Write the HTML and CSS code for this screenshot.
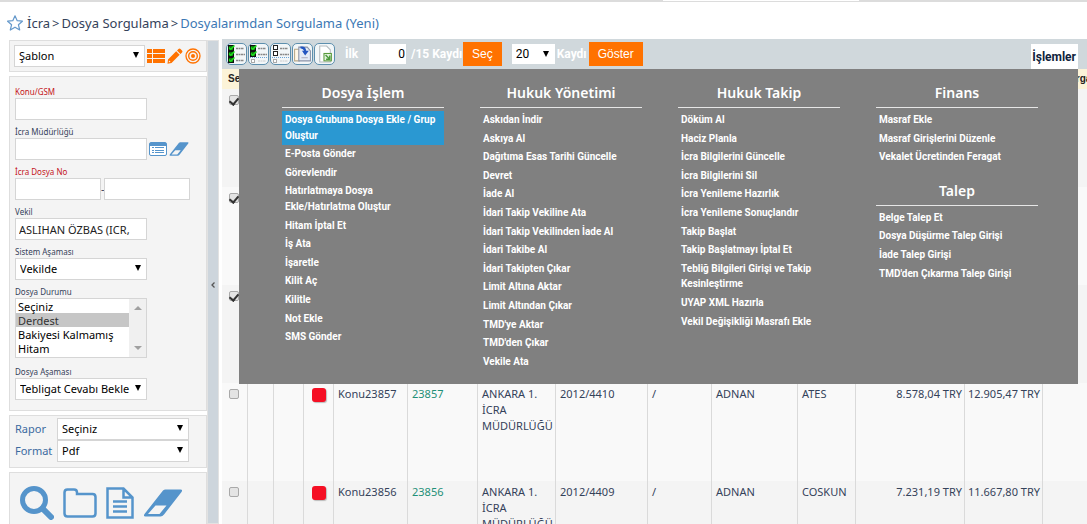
FILE: index.html
```html
<!DOCTYPE html>
<html lang="tr">
<head>
<meta charset="utf-8">
<title>Dosyalarımdan Sorgulama (Yeni)</title>
<link rel="stylesheet" href="styles.css">
</head>
<body>
<svg width="0" height="0" class="sprite" aria-hidden="true">
  <symbol id="eraser" viewBox="0 0 40 28">
    <path fill="#5594cb" fill-rule="evenodd" d="M20 1.5Q21 .5 22.500 .5H37.500Q40 .5 38.500 3L21 25.500Q19.500 27.500 17.500 27.500H2.500Q0 27.500 1.500 25ZM12.500 16.500 5 25H16.500L23.500 16.500Z"/>
  </symbol>
  <symbol id="tick" viewBox="0 0 7 6">
    <rect x=".5" y=".5" width="5" height="5" fill="#0c7a0c" stroke="#111"/><path d="M1 2.500 2.800 4.300 6.500 .5" fill="none" stroke="#1fe01f" stroke-width="1.500"/>
  </symbol>
</svg>
<div class="strip"></div>
<nav class="crumbs" aria-label="Konum">
  <svg class="star" viewBox="0 0 16 16"><path d="M8 .8 10.200 5.700 15.400 6.200 11.400 9.700 12.700 15 8 12.200 3.300 15 4.600 9.700 .6 6.200 5.800 5.700Z" fill="none" stroke="#6699cb" stroke-width="1.200" stroke-linejoin="round"/></svg>
  <span>İcra</span><span class="sep">&gt;</span><span>Dosya Sorgulama</span><span class="sep">&gt;</span><a href="#">Dosyalarımdan Sorgulama (Yeni)</a>
</nav>
<div class="page">
  <aside class="sidebar">
    <section class="panel template">
      <div class="drop"><select aria-label="Şablon"><option>Şablon</option></select></div>
      <svg class="list-icon" viewBox="0 0 18 14"><path fill="#ff7200" d="M0 0H5V4H0ZM6 0H18V4H6ZM0 5H5V9H0ZM6 5H18V9H6ZM0 10H5V14H0ZM6 10H18V14H6Z"/></svg>
      <svg class="edit-icon" viewBox="0 0 16 16"><path fill="#ff7200" d="M11.500 1Q12.500 0 13.500 1L15 2.500Q16 3.500 15 4.500L13.500 6 10 2.500ZM9.200 3.300 12.700 6.800 4.500 15 .5 15.700 1 11.500ZM2 12.500 1.800 14.300 3.700 14Z" fill-rule="evenodd"/></svg>
      <svg class="edit-icon" viewBox="0 0 16 16"><g fill="none" stroke="#ff7200"><circle cx="8" cy="8" r="7" stroke-width="1.300"/><circle cx="8" cy="8" r="4.300" stroke-width="1.400"/></g><circle cx="8" cy="8" r="2" fill="#ff7200"/></svg>
    </section>
    <section class="panel filters">
      <div class="field"><label class="req" for="konu">Konu/GSM</label><input class="box" id="konu" type="text"></div>
      <div class="field"><label for="mud">İcra Müdürlüğü</label>
        <div class="line"><input class="box" id="mud" type="text">
          <svg class="pick" viewBox="0 0 18 14"><rect x=".5" y=".5" width="17" height="13" rx="1.500" fill="#fff" stroke="#5594cb"/><path fill="#5594cb" d="M1 1H17V4H1ZM3 5H5V6H3ZM6 5H15V6H6ZM3 8H5V9H3ZM6 8H15V9H6ZM3 10H5V11H3ZM6 10H15V11H6Z"/></svg>
          <svg class="wipe" viewBox="0 0 40 28"><use href="#eraser"/></svg></div></div>
      <div class="field"><label class="req" for="no1">İcra Dosya No</label>
        <div class="line pair"><input class="box" id="no1" type="text"><span>-</span><input class="box" aria-label="İcra Dosya No 2" type="text"></div></div>
      <div class="field"><label for="vekil">Vekil</label><input class="box" id="vekil" type="text" value="ASLIHAN ÖZBAS (ICR,"></div>
      <div class="field"><label for="sistem">Sistem Aşaması</label><div class="drop"><select id="sistem"><option>Vekilde</option></select></div></div>
      <div class="field"><label for="durum">Dosya Durumu</label>
        <div class="listbox"><select id="durum" multiple size="4"><option>Seçiniz</option><option selected>Derdest</option><option>Bakiyesi Kalmamış</option><option>Hitam</option></select>
          <span class="scroll"><i class="up"></i><i class="down"></i></span></div></div>
      <div class="field"><label for="asama">Dosya Aşaması</label><div class="drop"><select id="asama"><option>Tebligat Cevabı Bekle</option></select></div></div>
    </section>
    <section class="panel report">
      <label for="rapor">Rapor</label><div class="drop"><select id="rapor"><option>Seçiniz</option></select></div>
      <label for="format">Format</label><div class="drop"><select id="format"><option>Pdf</option></select></div>
    </section>
    <section class="panel actions">
      <button type="button" aria-label="Ara"><svg width="34" height="34" viewBox="0 0 34 34"><g fill="none" stroke="#5594cb"><circle cx="14" cy="14" r="11.500" stroke-width="5"/><path d="M22.500 22.500 31 31" stroke-width="6" stroke-linecap="round"/></g></svg></button>
      <button type="button" aria-label="Klasör"><svg width="34" height="30" viewBox="0 0 34 30"><path d="M1.500 4.500Q1.500 1.500 4.500 1.500H11Q14 1.500 14 4.500V6H29.500Q32.500 6 32.500 9V25.500Q32.500 28.500 29.500 28.500H4.500Q1.500 28.500 1.500 25.500Z" fill="none" stroke="#5594cb" stroke-width="2.500"/></svg></button>
      <button type="button" aria-label="Belge"><svg width="28" height="32" viewBox="0 0 28 32"><path d="M1.500 1.500H17.500L26.500 10.500V30.500H1.500ZM17.500 1.500V10.500H26.500M7 14.500H21M7 19.500H21M7 24.500H21" fill="none" stroke="#5594cb" stroke-width="2.500"/></svg></button>
      <button type="button" aria-label="Temizle"><svg width="40" height="28" viewBox="0 0 40 28"><use href="#eraser"/></svg></button>
    </section>
  </aside>
  <button class="splitter" type="button" aria-label="Daralt"><svg width="4" height="6" viewBox="0 0 4 6"><path d="M3.500 .5 1 3 3.500 5.500" fill="none" stroke="#555" stroke-width="1.300"/></svg></button>
  <main class="results">
    <div class="toolbar">
      <div class="tools">
        <button type="button" aria-label="Tümünü seç"><svg viewBox="0 0 19 20"><use href="#tick" x="1" y="1" width="7" height="6"/><use href="#tick" x="1" y="7" width="7" height="6"/><use href="#tick" x="1" y="13" width="7" height="6"/><path d="M9 4.500H17M9 10.500H18M9 16.500H17" stroke="#888" stroke-width="1.500" stroke-dasharray="2 .5"/></svg></button>
        <button type="button" aria-label="Sayfayı seç"><svg viewBox="0 0 19 20"><use href="#tick" x="1" y="1" width="7" height="6"/><use href="#tick" x="1" y="7" width="7" height="6"/><path d="M1 13.500H18" stroke="#6ba3d6" stroke-dasharray="1 1"/><rect x="2.500" y="15.500" width="3" height="3" fill="#fff" stroke="#aaa"/><path d="M9 4.500H17M9 10.500H18" stroke="#888" stroke-width="1.500" stroke-dasharray="2 .5"/><path d="M9 17H17" stroke="#ccc" stroke-dasharray="2 .5"/></svg></button>
        <button type="button" aria-label="Seçimi kaldır"><svg viewBox="0 0 19 20"><g fill="#fff" stroke="#222"><rect x="2.500" y="1.500" width="4" height="4"/><rect x="2.500" y="7.500" width="4" height="4"/><rect x="2.500" y="15.500" width="3" height="3" stroke="#aaa"/></g><path d="M1 13.500H18" stroke="#6ba3d6" stroke-dasharray="1 1"/><path d="M9 4.500H17M9 10.500H18" stroke="#888" stroke-width="1.500" stroke-dasharray="2 .5"/><path d="M9 17H17" stroke="#ccc" stroke-dasharray="2 .5"/></svg></button>
        <button type="button" aria-label="Kopyala"><svg viewBox="0 0 18 18"><path d="M1.500 4.500H6V15.500H1.500Z" fill="#fff8e8" stroke="#b8a888"/><path d="M5.500 2.500H13.500L16.500 6V15.500H5.500Z" fill="#e4ebf6" stroke="#8b93a8"/><path d="M7 2Q12 1 12.500 6H15L11.500 10.500 8.500 6H10.500Q10 4 7 3.500Z" fill="#2456c0"/><path d="M8 12.500H14" stroke="#aab"/></svg></button>
        <button type="button" aria-label="Excel'e aktar"><svg viewBox="0 0 18 18"><path d="M4.500 1.500H11L14.500 5V16.500H4.500Z" fill="#fff" stroke="#b5bcc0"/><rect x="8.500" y="8.500" width="7" height="7" fill="#e3f3dd" stroke="#5a9a3c"/><path d="M10 10 14 14M14 10.500V14H10.500" fill="none" stroke="#4c9a3c" stroke-width="1.400"/></svg></button>
      </div>
      <label class="first" for="ilk">İlk</label><input class="count" id="ilk" type="text" value="0"><span class="total">/15 Kaydı</span>
      <button class="go" type="button">Seç</button>
      <div class="drop size"><select id="adet"><option>20</option></select></div><label class="rows" for="adet">Kaydı</label>
      <button class="go" type="button">Göster</button>
      <div class="operations">
        <button class="tab" type="button">İşlemler</button>
        <div class="mega">
          <section><h2>Dosya İşlem</h2><ul>
            <li class="on"><a href="#">Dosya Grubuna Dosya Ekle / Grup<br>Oluştur</a></li><li><a href="#">E-Posta Gönder</a></li><li><a href="#">Görevlendir</a></li><li><a href="#">Hatırlatmaya Dosya<br>Ekle/Hatırlatma Oluştur</a></li><li><a href="#">Hitam İptal Et</a></li><li><a href="#">İş Ata</a></li><li><a href="#">İşaretle</a></li><li><a href="#">Kilit Aç</a></li><li><a href="#">Kilitle</a></li><li><a href="#">Not Ekle</a></li><li><a href="#">SMS Gönder</a></li></ul></section>
          <section><h2>Hukuk Yönetimi</h2><ul>
            <li><a href="#">Askıdan İndir</a></li><li><a href="#">Askıya Al</a></li><li><a href="#">Dağıtıma Esas Tarihi Güncelle</a></li><li><a href="#">Devret</a></li><li><a href="#">İade Al</a></li><li><a href="#">İdari Takip Vekiline Ata</a></li><li><a href="#">İdari Takip Vekilinden İade Al</a></li><li><a href="#">İdari Takibe Al</a></li><li><a href="#">İdari Takipten Çıkar</a></li><li><a href="#">Limit Altına Aktar</a></li><li><a href="#">Limit Altından Çıkar</a></li><li><a href="#">TMD'ye Aktar</a></li><li><a href="#">TMD'den Çıkar</a></li><li><a href="#">Vekile Ata</a></li></ul></section>
          <section><h2>Hukuk Takip</h2><ul>
            <li><a href="#">Döküm Al</a></li><li><a href="#">Haciz Planla</a></li><li><a href="#">İcra Bilgilerini Güncelle</a></li><li><a href="#">İcra Bilgilerini Sil</a></li><li><a href="#">İcra Yenileme Hazırlık</a></li><li><a href="#">İcra Yenileme Sonuçlandır</a></li><li><a href="#">Takip Başlat</a></li><li><a href="#">Takip Başlatmayı İptal Et</a></li><li><a href="#">Tebliğ Bilgileri Girişi ve Takip<br>Kesinleştirme</a></li><li><a href="#">UYAP XML Hazırla</a></li><li><a href="#">Vekil Değişikliği Masrafı Ekle</a></li></ul></section>
          <section><h2>Finans</h2><ul>
            <li><a href="#">Masraf Ekle</a></li><li><a href="#">Masraf Girişlerini Düzenle</a></li><li><a href="#">Vekalet Ücretinden Feragat</a></li></ul>
            <h2>Talep</h2><ul>
            <li><a href="#">Belge Talep Et</a></li><li><a href="#">Dosya Düşürme Talep Girişi</a></li><li><a href="#">İade Talep Girişi</a></li><li><a href="#">TMD'den Çıkarma Talep Girişi</a></li></ul></section>
        </div>
      </div>
    </div>
    <table class="grid">
      <colgroup><col class="w26"><col class="w26"><col class="w30"><col class="w30"><col class="w74"><col class="w70"><col class="w78"><col class="w92"><col class="w64"><col class="w86"><col class="w58"><col class="w109"><col class="w78"><col></colgroup>
      <thead><tr><th>Seç</th><th></th><th></th><th></th><th></th><th></th><th></th><th></th><th></th><th></th><th></th><th></th><th></th><th class="last">Sorga</th></tr></thead>
      <tbody>
        <tr><td><input type="checkbox" aria-label="Kayıt 1" checked></td><td></td><td></td><td></td><td></td><td></td><td></td><td></td><td></td><td></td><td></td><td></td><td></td><td></td></tr>
        <tr><td><input type="checkbox" aria-label="Kayıt 2" checked></td><td></td><td></td><td></td><td></td><td></td><td></td><td></td><td></td><td></td><td></td><td></td><td></td><td></td></tr>
        <tr><td><input type="checkbox" aria-label="Kayıt 3" checked></td><td></td><td></td><td></td><td></td><td></td><td></td><td></td><td></td><td></td><td></td><td></td><td></td><td></td></tr>
        <tr><td><input type="checkbox" aria-label="Kayıt 4"></td><td></td><td></td><td><span class="flag"></span></td><td>Konu23857</td><td><a href="#">23857</a></td><td>ANKARA 1. İCRA MÜDÜRLÜĞÜ</td><td>2012/4410</td><td>/</td><td>ADNAN</td><td>ATES</td><td class="num">8.578,04 TRY</td><td class="num">12.905,47 TRY</td><td></td></tr>
        <tr><td><input type="checkbox" aria-label="Kayıt 5"></td><td></td><td></td><td><span class="flag"></span></td><td>Konu23856</td><td><a href="#">23856</a></td><td>ANKARA 1. İCRA MÜDÜRLÜĞÜ</td><td>2012/4409</td><td>/</td><td>ADNAN</td><td>COSKUN</td><td class="num">7.231,19 TRY</td><td class="num">11.667,80 TRY</td><td></td></tr>
      </tbody>
    </table>
  </main>
</div>
</body>
</html>
```
FILE: styles.css
```css
* { box-sizing: border-box; }
body {
  margin: 0;
  height: 100vh;
  overflow: hidden;
  display: flex;
  flex-direction: column;
  background: #fff;
  color: #34425a;
  font: 11px/16px "Noto Sans", sans-serif;
}
a { color: inherit; text-decoration: none; }
button, input, select { font: inherit; margin: 0; border-radius: 0; outline: 0; }
button { border: 0; padding: 0; background: none; }
svg { display: block; flex: none; }
.sprite { position: absolute; }

.strip {
  flex: none; height: 2px; border-bottom: 1px solid #dcdcdc;
  background: linear-gradient(90deg, #dcdcdc 61%, #fff 61%, #fff 79%, #dcdcdc 79%);
}
.crumbs { display: flex; align-items: center; gap: 2px; flex: none; height: 37px; padding: 4px 7px 0; font-size: 13px; }
.crumbs a { color: #3c78b4; }
.star { width: 16px; height: 16px; margin-right: 2px; }

.page { display: flex; flex: 1; min-height: 0; }
.sidebar { display: flex; flex-direction: column; gap: 4px; flex: none; width: 207px; padding: 1px 0 0 9px; }
.panel { flex: none; border: 1px solid #dedede; background: #f4f4f4; }
.box, .drop select { width: 100%; height: 22px; border: 1px solid #d5d5d5; background: #fff; color: #222; padding: 0 4px; }
.box { padding: 0 3px; }
.drop { position: relative; }
.drop select { display: block; appearance: none; color: #000; }
.drop::after { content: ""; position: absolute; right: 6px; top: 7px; border: 3px solid transparent; border-top: 6px solid #000; border-bottom: 0; pointer-events: none; }

.template { display: flex; align-items: center; gap: 2px; height: 32px; padding: 0 5px 0 4px; }
.template .drop { flex: 1; }
.list-icon { width: 18px; height: 14px; }
.edit-icon { width: 16px; height: 16px; }

.filters { display: flex; flex-direction: column; gap: 6px; padding: 9px 5px 10px; }
.field:last-child { margin-top: 2px; }
.field label { display: block; height: 12px; font-size: 8px; line-height: 12px; }
.field .req { color: #c4161c; }
.field .box, .field .drop, .listbox { display: block; width: 132px; }
.line { display: flex; align-items: center; gap: 2px; }
.line .pick { width: 18px; height: 14px; }
.line .wipe { width: 20px; height: 14px; }
.line.pair { gap: 0; }
.field .pair .box { width: 86px; }
.pair span { width: 3px; overflow: hidden; }
.listbox { display: flex; height: 60px; border: 1px solid #d5d5d5; background: #fff; }
.field .listbox { display: flex; }
.listbox select { flex: 1; min-width: 0; height: 58px; border: 0; padding: 0; overflow: hidden; background: #fff; color: #000; }
.listbox option { height: 14px; min-height: 14px; padding: 0 2px; line-height: 14px; }
.listbox option:checked { background: #c6c6c6 linear-gradient(#c6c6c6, #c6c6c6); color: #333; }
.scroll { display: flex; flex-direction: column; justify-content: space-between; align-items: center; width: 17px; padding: 7px 0; background: #f0f0f0; }
.scroll i { border: 4px solid transparent; }
.scroll .up { border-top: 0; border-bottom-color: #a0a0a0; }
.scroll .down { border-bottom: 0; border-top-color: #a0a0a0; }

.report { display: grid; grid-template-columns: 37px 132px; column-gap: 5px; align-items: center; padding: 2px 5px 5px; color: #3b6aa0; }

.actions { display: flex; align-items: center; gap: 9px; height: 62px; padding: 0 10px; }

.splitter { display: flex; align-items: center; flex: none; width: 12px; margin-top: 1px; padding: 6px 0 0 3px; border: 1px solid #e2e2e2; background: #cdd5dc; }

.results { flex: 1; min-width: 0; margin-left: 3px; }
.toolbar { display: flex; align-items: center; height: 30px; background: #d0d8dc; color: #fff; font: 700 12px/16px Roboto, sans-serif; }
.tools { display: flex; gap: 1px; padding-left: 4px; }
.tools button { width: 21px; height: 22px; border: 1px solid #5d8fae; border-radius: 5px; background: #f2f6f8; overflow: hidden; }
.tools svg { width: 19px; height: 20px; }
.first { width: 34px; padding-left: 10px; }
.count { width: 37px; height: 20px; border: 0; padding: 0 1px; text-align: right; font-weight: 400; color: #000; background: #fff; }
.total { width: 57px; padding-left: 5px; white-space: nowrap; }
.rows { width: 32px; }
.go { flex: none; height: 24px; padding: 0 9px; background: #ff7200; color: #fff; font: 12px/24px "Liberation Sans", Arial, sans-serif; }
.size { width: 43px; margin: 0 2px 0 10px; }
.size select { height: 20px; border: 0; font-weight: 400; }
.operations { position: relative; align-self: flex-end; margin: 0 9px 0 auto; }
.tab { display: block; height: 25px; padding: 0 2px 0 1px; background: #fff; color: #10233c; }

.mega {
  position: absolute; right: 0; top: 100%; z-index: 2;
  display: grid; grid-template-columns: repeat(4, minmax(0, 1fr)); gap: 36px;
  width: calc(100vw - 248px); padding: 13px 40px 13px 43px;
  background: #808080; font-size: 10px; line-height: 1.56;
}
.mega h2 { margin: 0 0 3px; height: 26px; border-bottom: 1px solid #e6e6e6; text-align: center; font: 600 14px/22px "Noto Sans", sans-serif; }
.mega ul { list-style: none; margin: 0; padding: 0; }
.mega ul + h2 { margin-top: 13px; }
.mega li { padding: 1px 3px 2px; white-space: nowrap; }
.mega .on { background: #2a98d2; }

.grid { width: 100%; table-layout: fixed; border-collapse: separate; border-spacing: 0; }
.grid th { height: 20px; padding: 0 6px; background: #fcf3d8; color: #222; text-align: left; font: bold 10px/18px "Liberation Sans", Arial, sans-serif; }
.grid th.last { padding: 0 0 0 20px; }
.grid td { height: 98px; padding: 3px 2px 0 4px; border-right: 1px solid #dadada; vertical-align: top; }
.grid td:first-child { padding: 6px 0 0 7px; }
.grid td:last-child { border-right: 0; }
.grid tr { background: #f4f4f4; }
.grid tr:nth-child(even) { background: #f9f9f9; }
.grid a { color: #1f9078; }
.grid .num { text-align: right; white-space: nowrap; padding-left: 0; }
.grid input { display: grid; place-content: center; appearance: none; width: 10px; height: 10px; border: 1px solid #a9a9a9; border-radius: 2px; background: #e4e4e4; }
.grid input:checked::before { content: ""; width: 4px; height: 7px; border: solid #333; border-width: 0 2px 2px 0; transform: rotate(40deg); }
.flag { display: block; width: 14px; height: 14px; margin: 2px 0 0 4px; border-radius: 3px; background: #f50f24; box-shadow: 1px 1px 1px #bbb; }
.w26 { width: 26px; } .w30 { width: 30px; } .w58 { width: 58px; } .w64 { width: 64px; }
.w70 { width: 70px; } .w74 { width: 74px; } .w78 { width: 78px; } .w86 { width: 86px; }
.w92 { width: 92px; } .w109 { width: 109px; }
```
